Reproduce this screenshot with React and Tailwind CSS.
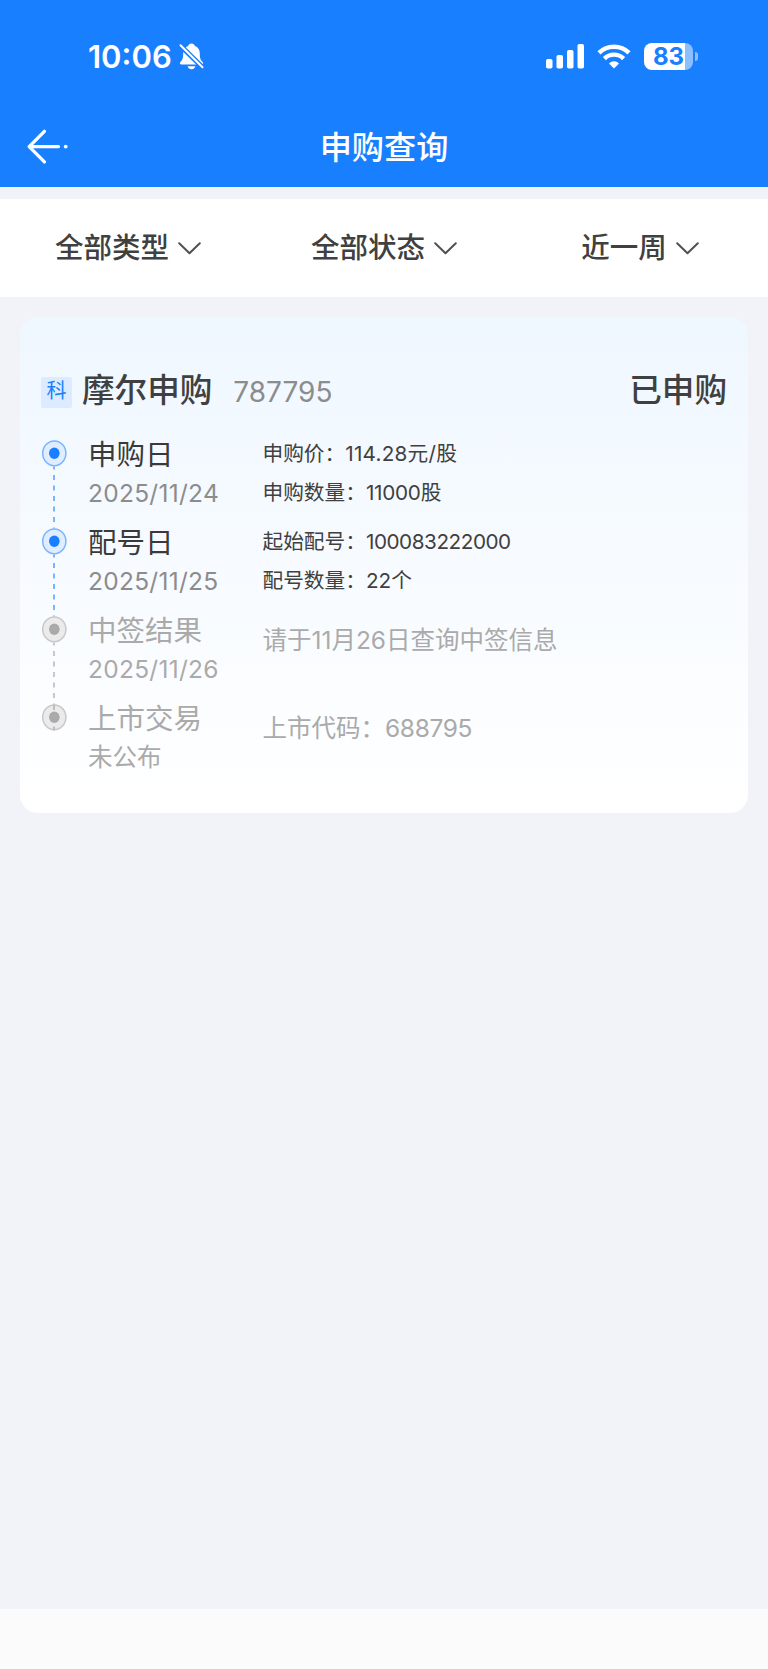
const filters = ["全部类型", "全部状态", "近一周"];

const steps = [
  {
    title: "申购日",
    date: "2025/11/24",
    active: true,
    details: [
      { label: "申购价：", value: "114.28元/股", spacing: "tracking-[0.25px]" },
      { label: "申购数量：", value: "11000股", spacing: "tracking-[-0.25px]" },
    ],
  },
  {
    title: "配号日",
    date: "2025/11/25",
    active: true,
    details: [
      { label: "起始配号：", value: "100083222000", spacing: "tracking-[-0.45px]" },
      { label: "配号数量：", value: "22个", spacing: "tracking-normal" },
    ],
  },
  {
    title: "中签结果",
    date: "2025/11/26",
    active: false,
    details: [{ label: "请于11月26日查询中签信息", value: "", spacing: "" }],
  },
  {
    title: "上市交易",
    date: "未公布",
    active: false,
    details: [{ label: "上市代码：", value: "688795", spacing: "tracking-[-0.35px]" }],
  },
];

const BellOff = () => (
  <svg width="25" height="27" viewBox="0 0 25 27" fill="none">
    <path
      d="M12.500.6c1.700 0 3 1 3.400 2.400 3 1 4.900 3.700 4.900 7.200 0 5.500.9 7 2.600 8.500 1.300 1.200.8 2.800-.9 2.800H2.600C.8 21.500.3 19.900 1.600 18.700c1.700-1.500 2.600-3 2.600-8.500 0-3.500 1.900-6.200 4.900-7.200C9.500 1.600 10.800.6 12.500.6Z"
      fill="#fff"
    />
    <path d="M8.600 23.300h7.800c-.5 2-2 3-3.900 3s-3.400-1-3.900-3Z" fill="#fff" />
    <path d="M-1 .2 26 26.700" stroke="#187fff" strokeWidth="5" />
    <path d="m1.500 2.200 22 22" stroke="#fff" strokeWidth="2" strokeLinecap="round" />
  </svg>
);

const Signal = () => (
  <svg width="38" height="25" viewBox="0 0 38 25" fill="#fff">
    <rect x="0" y="15" width="6.500" height="9.500" rx="1.800" />
    <rect x="10.500" y="11" width="6.500" height="13.500" rx="1.800" />
    <rect x="21" y="6" width="6.500" height="18.500" rx="1.800" />
    <rect x="31.500" y="0" width="6.500" height="24.500" rx="1.800" />
  </svg>
);

const Wifi = () => (
  <svg width="34" height="25" viewBox="0 0 34 25" fill="none">
    <path d="M2 8.800a21.500 21.500 0 0 1 30 0" stroke="#fff" strokeWidth="4.500" />
    <path d="M7.400 14.600a13.700 13.700 0 0 1 19.200 0" stroke="#fff" strokeWidth="4.400" />
    <path d="M17 24.500 12 19.400a7 7 0 0 1 10 0Z" fill="#fff" />
  </svg>
);

const Battery = () => (
  <div className="flex items-center">
    <div className="flex h-[27px] w-[49px] items-center justify-center overflow-hidden rounded-[8px] bg-[linear-gradient(90deg,#fff_41px,#8cbfff_41px)] text-[24px] leading-none font-bold text-[#187fff]">
      83
    </div>
    <div className="ml-[2px] h-[9px] w-[3px] rounded-r-full bg-[#8cbfff]" />
  </div>
);

const BackArrow = () => (
  <svg
    width="42"
    height="36"
    viewBox="0 0 42 36"
    fill="none"
    stroke="#fff"
    strokeWidth="3.300"
    strokeLinecap="round"
    strokeLinejoin="round"
  >
    <path d="M17.400 2.300 2.200 17.600l15.200 15.300M2.200 17.600h29.300" />
    <circle cx="38.700" cy="17.600" r="1.900" fill="#fff" stroke="none" />
  </svg>
);

const Chevron = () => (
  <svg width="23" height="13" viewBox="0 0 23 13" fill="none" stroke="#505050" strokeWidth="2" strokeLinecap="round" strokeLinejoin="round">
    <path d="m1.200 1.200 10.300 10 10.300-10" />
  </svg>
);

const StepNode = ({ active, last }) => {
  const ring = active ? "#7ab5ff" : "#c8c8c8";
  return (
    <svg className="shrink-0 overflow-visible" width="26" height="88" viewBox="0 0 26 88">
      <ellipse cx="13.300" cy="13.300" rx="11.600" ry="12.400" fill={active ? "#dfedff" : "#ebebeb"} stroke={ring} strokeWidth="1.500" />
      <ellipse cx="13.300" cy="13.300" rx="5.300" ry="5.700" fill={active ? "#187fff" : "#aaaaaa"} />
      {!last && (
        <path
          d={active ? "M13 26.500V88.500" : "M13 26.500V90"}
          stroke={ring}
          strokeWidth="2"
          strokeDasharray="5 5.500"
          strokeDashoffset="2"
        />
      )}
      {/* the last dashes run over the final node */}
      {last && <path d="M13 1V6M13 22.500V26.500" stroke="#bdbdbd" strokeWidth="2" />}
    </svg>
  );
};

const Step = ({ step, last }) => (
  <div className="flex h-[88px] items-start">
    <StepNode active={step.active} last={last} />
    <div className="ml-[21px] w-[174.500px]">
      <p className={`-mt-[5px] text-[28.5px] leading-[40px] ${step.active ? "text-[#3a3a3a]" : "text-[#aaa]"}`}>
        {step.title}
      </p>
      <p
        className={`-mt-px text-[24.5px] leading-[38px] ${last ? "" : "tracking-[0.28px]"} ${
          step.active ? "text-[#8c8c8c]" : "text-[#aaa]"
        }`}
      >
        {step.date}
      </p>
    </div>
    <div
      className={
        step.active
          ? "-mt-[6px] text-[20.7px] leading-[39px] text-[#404040]"
          : "mt-[4px] text-[24.5px] leading-[40px] text-[#aaa]"
      }
    >
      {step.details.map(({ label, value, spacing }) => (
        <p key={label}>
          {label}
          <span className={spacing}>{value}</span>
        </p>
      ))}
    </div>
  </div>
);

const App = () => {
  return (
    <div className="flex h-[1669px] w-[768px] flex-col bg-[#f2f3f8] font-['Inter','Noto_Sans_CJK_SC',sans-serif] whitespace-nowrap">
      <header className="h-[187px] bg-[#187fff] text-white">
        <div className="flex h-[107px] items-center justify-between pt-[6px] pr-[70px] pl-[88px]">
          <div className="flex items-center gap-[7px]">
            <span className="pt-px text-[31px] leading-[40px] font-semibold">10:06</span>
            <BellOff />
          </div>
          <div className="flex items-center gap-[13px]">
            <Signal />
            <Wifi />
            <Battery />
          </div>
        </div>
        <div className="grid h-20 grid-cols-3 items-center pl-[27px]">
          <BackArrow />
          <h1 className="-ml-[27px] pt-px text-center text-[32.2px] leading-[44px] font-medium">申购查询</h1>
        </div>
      </header>

      <nav className="mt-[12px] grid h-[98px] grid-cols-3 bg-white">
        {filters.map((name) => (
          <button key={name} className="flex items-center justify-center gap-[9px] text-[28.5px] font-medium text-[#404040]">
            {name}
            <Chevron />
          </button>
        ))}
      </nav>

      <main className="flex-1 px-[20.4px] pt-5">
        <section className="h-[496px] rounded-[18px] bg-linear-to-b from-[#eff7ff] to-white px-[20.6px] pt-[53px]">
          <div className="flex h-[44px] items-center">
            <span className="flex h-[31px] w-[31px] items-center justify-center rounded-[2px] bg-[#dcebff] pb-[3px] text-[20px] text-[#187fff]">
              科
            </span>
            <h2 className="ml-[10px] pb-[3px] text-[32.6px] font-medium text-[#404040]">摩尔申购</h2>
            <span className="ml-[21px] text-[28px] text-[#8c8c8c]">787795</span>
            <span className="ml-auto pb-[3px] text-[32.6px] font-medium text-[#404040]">已申购</span>
          </div>
          <div className="mt-[26px]">
            {steps.map((step, i) => (
              <Step key={step.title} step={step} last={i === steps.length - 1} />
            ))}
          </div>
        </section>
      </main>

      <footer className="h-[60px] bg-[#fbfbfb]" />
    </div>
  );
};

export default App;
